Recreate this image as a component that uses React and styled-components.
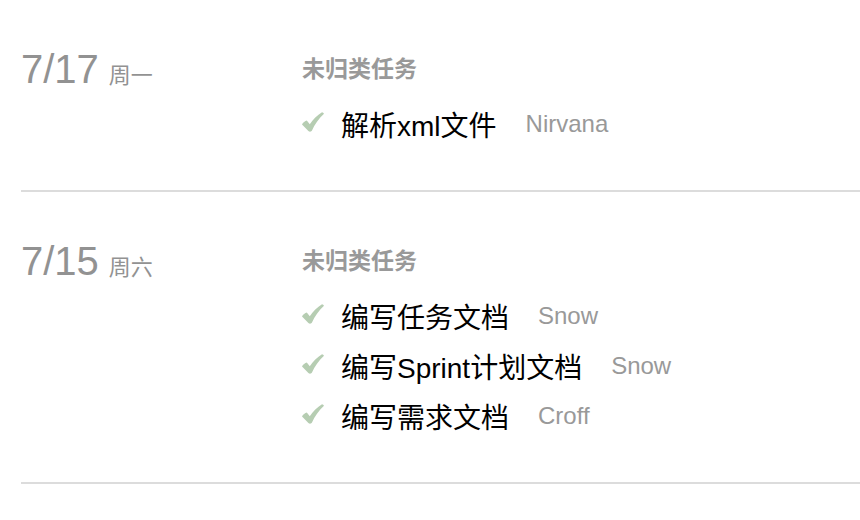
import React from "react";
import styled, { createGlobalStyle } from "styled-components";

const GlobalStyle = createGlobalStyle`
  html, body {
    margin: 0;
    padding: 0;
    background: #fff;
  }
  body {
    font-family: "Liberation Sans", "Noto Sans CJK SC", sans-serif;
  }
`;

const days = [
  {
    date: "7/17",
    week: "周一",
    groups: [
      {
        title: "未归类任务",
        tasks: [{ name: "解析xml文件", owner: "Nirvana" }],
      },
    ],
  },
  {
    date: "7/15",
    week: "周六",
    groups: [
      {
        title: "未归类任务",
        tasks: [
          { name: "编写任务文档", owner: "Snow" },
          { name: "编写Sprint计划文档", owner: "Snow" },
          { name: "编写需求文档", owner: "Croff" },
        ],
      },
    ],
  },
];

function CheckIcon() {
  return (
    <Check width="22" height="20" viewBox="0 0 22 20">
      <path
        d="M0 12.4 C1 10.4 3 8.8 4.8 8.4 L7.8 12.2 C11 7.6 15.2 3 20 0.2 C20.9 0.4 21.6 1 22 1.8 C16.8 6.6 12.6 12.6 10 18.6 C9.4 19.8 7.4 20 6.4 19 Z"
        fill="#b6cdb2"
      />
    </Check>
  );
}

function DaySection({ day }) {
  return (
    <Section>
      <DateCol>
        <DateText>{day.date}</DateText>
        <WeekText>{day.week}</WeekText>
      </DateCol>
      <TaskCol>
        {day.groups.map((g, i) => (
          <Group key={i}>
            <GroupTitle>{g.title}</GroupTitle>
            <TaskList>
              {g.tasks.map((t, j) => (
                <TaskRow key={j}>
                  <CheckIcon />
                  <TaskName>{t.name}</TaskName>
                  <Owner>{t.owner}</Owner>
                </TaskRow>
              ))}
            </TaskList>
          </Group>
        ))}
      </TaskCol>
    </Section>
  );
}

export default function App() {
  return (
    <Page>
      <GlobalStyle />
      {days.map((d) => (
        <DaySection key={d.date} day={d} />
      ))}
    </Page>
  );
}

const Page = styled.div`
  padding-left: 21px;
  width: 839px;
`;

const Section = styled.div`
  display: grid;
  grid-template-columns: 281px 1fr;
  padding: 55px 0 41px;
  border-bottom: 2px solid #dcdcdc;
`;

const DateCol = styled.div`
  display: flex;
  align-items: baseline;
  height: 28px;
  line-height: 28px;
  color: #929292;
`;

const DateText = styled.span`
  font-size: 40px;
`;

const WeekText = styled.span`
  font-size: 22px;
  margin-left: 10px;
`;

const TaskCol = styled.div`
  display: flex;
  flex-direction: column;
`;

const Group = styled.div`
  display: flex;
  flex-direction: column;
`;

const GroupTitle = styled.div`
  font-size: 23px;
  font-weight: bold;
  line-height: 28px;
  color: #999;
`;

const TaskList = styled.div`
  margin-top: 16px;
  display: flex;
  flex-direction: column;
`;

const TaskRow = styled.div`
  display: flex;
  align-items: center;
  height: 50px;
`;

const Check = styled.svg`
  flex: none;
  margin-right: 17px;
  margin-bottom: 4px;
`;

const TaskName = styled.span`
  font-size: 28px;
  color: #000;
`;

const Owner = styled.span`
  font-size: 24px;
  color: #999;
  margin-left: 29px;
`;
